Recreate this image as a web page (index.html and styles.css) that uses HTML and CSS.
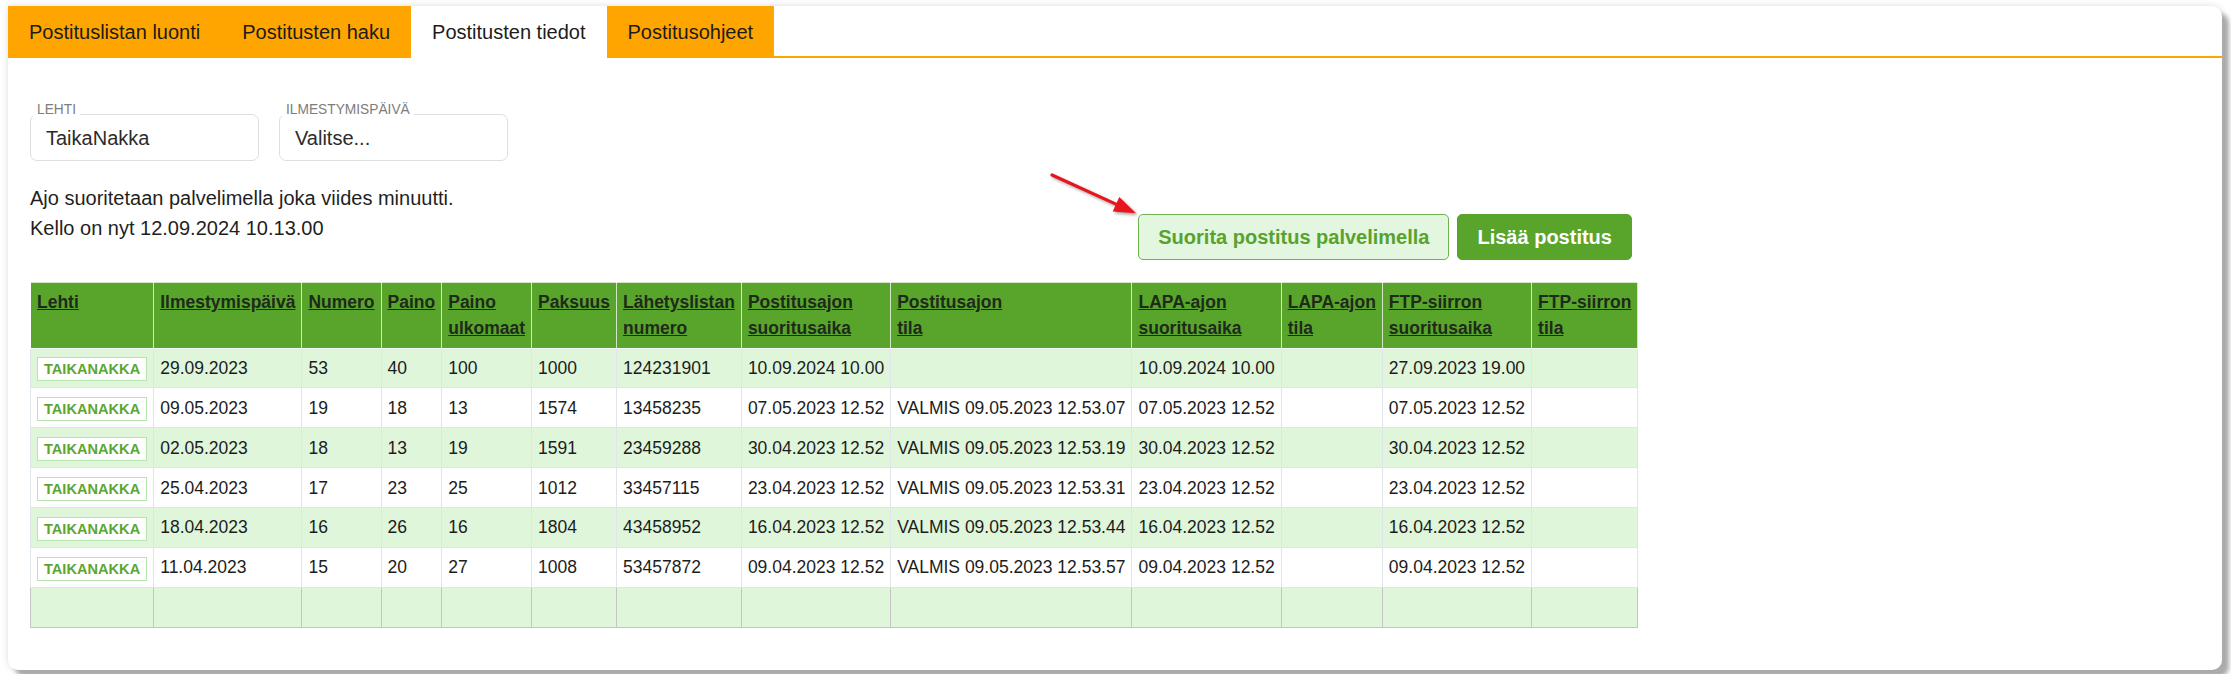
FILE: index.html
```html
<!DOCTYPE html>
<html lang="fi">
<head>
<meta charset="utf-8">
<title>Postitusten tiedot</title>
<link rel="stylesheet" href="styles.css">
</head>
<body>
<div class="card">
  <nav class="tabs">
    <div class="tab">Postituslistan luonti</div>
    <div class="tab">Postitusten haku</div>
    <div class="tab active">Postitusten tiedot</div>
    <div class="tab">Postitusohjeet</div>
  </nav>
  <div class="content">
    <div class="filters">
      <div class="field">
        <span class="field-label">LEHTI</span>
        <div class="field-box">TaikaNakka</div>
      </div>
      <div class="field">
        <span class="field-label">ILMESTYMISPÄIVÄ</span>
        <div class="field-box">Valitse...</div>
      </div>
    </div>
    <div class="panel">
      <div class="info-row">
        <div class="info">
          <div>Ajo suoritetaan palvelimella joka viides minuutti.</div>
          <div>Kello on nyt 12.09.2024 10.13.00</div>
        </div>
        <div class="actions">
          <button class="btn btn-light">Suorita postitus palvelimella</button>
          <button class="btn btn-primary">Lisää postitus</button>
        </div>
      </div>
      <table class="grid">
        <thead>
          <tr>
            <th><a href="#">Lehti</a></th>
            <th><a href="#">Ilmestymispäivä</a></th>
            <th><a href="#">Numero</a></th>
            <th><a href="#">Paino</a></th>
            <th><a href="#">Paino<br>ulkomaat</a></th>
            <th><a href="#">Paksuus</a></th>
            <th><a href="#">Lähetyslistan<br>numero</a></th>
            <th><a href="#">Postitusajon<br>suoritusaika</a></th>
            <th><a href="#">Postitusajon<br>tila</a></th>
            <th><a href="#">LAPA-ajon<br>suoritusaika</a></th>
            <th><a href="#">LAPA-ajon<br>tila</a></th>
            <th><a href="#">FTP-siirron<br>suoritusaika</a></th>
            <th><a href="#">FTP-siirron<br>tila</a></th>
          </tr>
        </thead>
        <tbody>
          <tr>
            <td><span class="badge">TAIKANAKKA</span></td>
            <td>29.09.2023</td><td>53</td><td>40</td><td>100</td><td>1000</td><td>124231901</td>
            <td>10.09.2024 10.00</td><td></td><td>10.09.2024 10.00</td><td></td><td>27.09.2023 19.00</td><td></td>
          </tr>
          <tr>
            <td><span class="badge">TAIKANAKKA</span></td>
            <td>09.05.2023</td><td>19</td><td>18</td><td>13</td><td>1574</td><td>13458235</td>
            <td>07.05.2023 12.52</td><td>VALMIS 09.05.2023 12.53.07</td><td>07.05.2023 12.52</td><td></td><td>07.05.2023 12.52</td><td></td>
          </tr>
          <tr>
            <td><span class="badge">TAIKANAKKA</span></td>
            <td>02.05.2023</td><td>18</td><td>13</td><td>19</td><td>1591</td><td>23459288</td>
            <td>30.04.2023 12.52</td><td>VALMIS 09.05.2023 12.53.19</td><td>30.04.2023 12.52</td><td></td><td>30.04.2023 12.52</td><td></td>
          </tr>
          <tr>
            <td><span class="badge">TAIKANAKKA</span></td>
            <td>25.04.2023</td><td>17</td><td>23</td><td>25</td><td>1012</td><td>33457115</td>
            <td>23.04.2023 12.52</td><td>VALMIS 09.05.2023 12.53.31</td><td>23.04.2023 12.52</td><td></td><td>23.04.2023 12.52</td><td></td>
          </tr>
          <tr>
            <td><span class="badge">TAIKANAKKA</span></td>
            <td>18.04.2023</td><td>16</td><td>26</td><td>16</td><td>1804</td><td>43458952</td>
            <td>16.04.2023 12.52</td><td>VALMIS 09.05.2023 12.53.44</td><td>16.04.2023 12.52</td><td></td><td>16.04.2023 12.52</td><td></td>
          </tr>
          <tr>
            <td><span class="badge">TAIKANAKKA</span></td>
            <td>11.04.2023</td><td>15</td><td>20</td><td>27</td><td>1008</td><td>53457872</td>
            <td>09.04.2023 12.52</td><td>VALMIS 09.05.2023 12.53.57</td><td>09.04.2023 12.52</td><td></td><td>09.04.2023 12.52</td><td></td>
          </tr>
        </tbody>
        <tfoot>
          <tr>
            <td>&nbsp;</td><td></td><td></td><td></td><td></td><td></td><td></td><td></td><td></td><td></td><td></td><td></td><td></td>
          </tr>
        </tfoot>
      </table>
    </div>
  </div>
  <svg class="arrow" width="100" height="56" viewBox="0 0 100 56" aria-hidden="true">
    <path d="M7 7 L72 36.6" stroke="#e8161c" stroke-width="3.2" stroke-linecap="round" fill="none"/>
    <polygon points="91,45.3 67.7,43.5 74.3,28.9" fill="#e8161c"/>
  </svg>
</div>
</body>
</html>
```

FILE: styles.css
```css
* { box-sizing: border-box; }

html, body {
  margin: 0;
  padding: 0;
  background: #ffffff;
}

body {
  font-family: "Liberation Sans", Arial, sans-serif;
  color: #1f1f1f;
  padding: 6px 9px 8px 8px;
}

.card {
  position: relative;
  background: #ffffff;
  border-radius: 0 10px 10px 10px;
  box-shadow: 7px 7px 4px #ababab, 0 0 7px rgba(0, 0, 0, 0.14);
  min-height: 660px;
}

.tabs {
  display: flex;
  border-bottom: 2px solid #ffa500;
  height: 52px;
}

.tab {
  height: 52px;
  margin-bottom: -2px;
  padding: 0 21px;
  line-height: 52px;
  font-size: 20px;
  color: #1c1c1c;
  background: #ffa500;
  white-space: nowrap;
}

.tab.active {
  background: #ffffff;
}

.content {
  padding: 0 22px 42px 22px;
}

.filters {
  display: flex;
  gap: 20px;
  margin-top: 56px;
}

.field {
  position: relative;
  width: 229px;
}

.field-label {
  position: absolute;
  left: 3px;
  top: -11.5px;
  padding: 0 4px;
  background: #ffffff;
  font-size: 13.75px;
  line-height: 13.75px;
  color: #7d7d7d;
}

.field-box {
  height: 47px;
  border: 1px solid #dcdfe3;
  border-radius: 7px;
  padding: 7.5px 15px;
  font-size: 20px;
  line-height: 30px;
  color: #2b2b2b;
}

.panel {
  width: fit-content;
}

.info-row {
  display: flex;
  justify-content: space-between;
  align-items: flex-start;
  margin-top: 22px;
}

.info {
  font-size: 20px;
  line-height: 30px;
  color: #1f1f1f;
}

.actions {
  display: flex;
  gap: 8px;
  margin-top: 31px;
  margin-right: 6.5px;
}

.btn {
  font-family: "Liberation Sans", Arial, sans-serif;
  font-size: 20px;
  font-weight: bold;
  line-height: 30px;
  padding: 7px 19px;
  border-radius: 5px;
  cursor: pointer;
}

.btn-light {
  background: #e3f6df;
  color: #58a22d;
  border: 1px solid #6fb34a;
}

.btn-primary {
  background: #59a52b;
  color: #ffffff;
  border: 1px solid #59a52b;
}

.grid {
  margin-top: 21.6px;
  border-collapse: collapse;
  font-size: 17.5px;
  line-height: 26.25px;
}

.grid th {
  background: #59a52b;
  text-align: left;
  vertical-align: top;
  padding: 6.25px 6px;
  border: 1px solid rgba(255, 255, 255, 0.72);
  font-weight: bold;
  white-space: nowrap;
}

.grid th a {
  color: #1e2a1a;
  text-decoration: underline;
}

.grid td {
  padding: 6.25px 6px;
  border: 1px solid #dfe6eb;
  white-space: nowrap;
  vertical-align: middle;
  color: #1c1c1c;
}

.grid tbody tr:nth-child(odd) td {
  background: #dff6db;
}

.grid tbody tr:nth-child(even) td {
  background: #ffffff;
}

.grid tfoot td {
  background: #dff6db;
  border: 1px solid #c4c4c4;
}

.badge {
  display: inline-block;
  vertical-align: middle;
  padding: 0 6px;
  border: 1px solid #b5e6ae;
  background: #ffffff;
  color: #5da52f;
  font-size: 14.6px;
  font-weight: bold;
  line-height: 22px;
}

.arrow {
  position: absolute;
  left: 1037px;
  top: 162px;
  filter: drop-shadow(2px 2px 1.5px rgba(0, 0, 0, 0.35));
}
```
